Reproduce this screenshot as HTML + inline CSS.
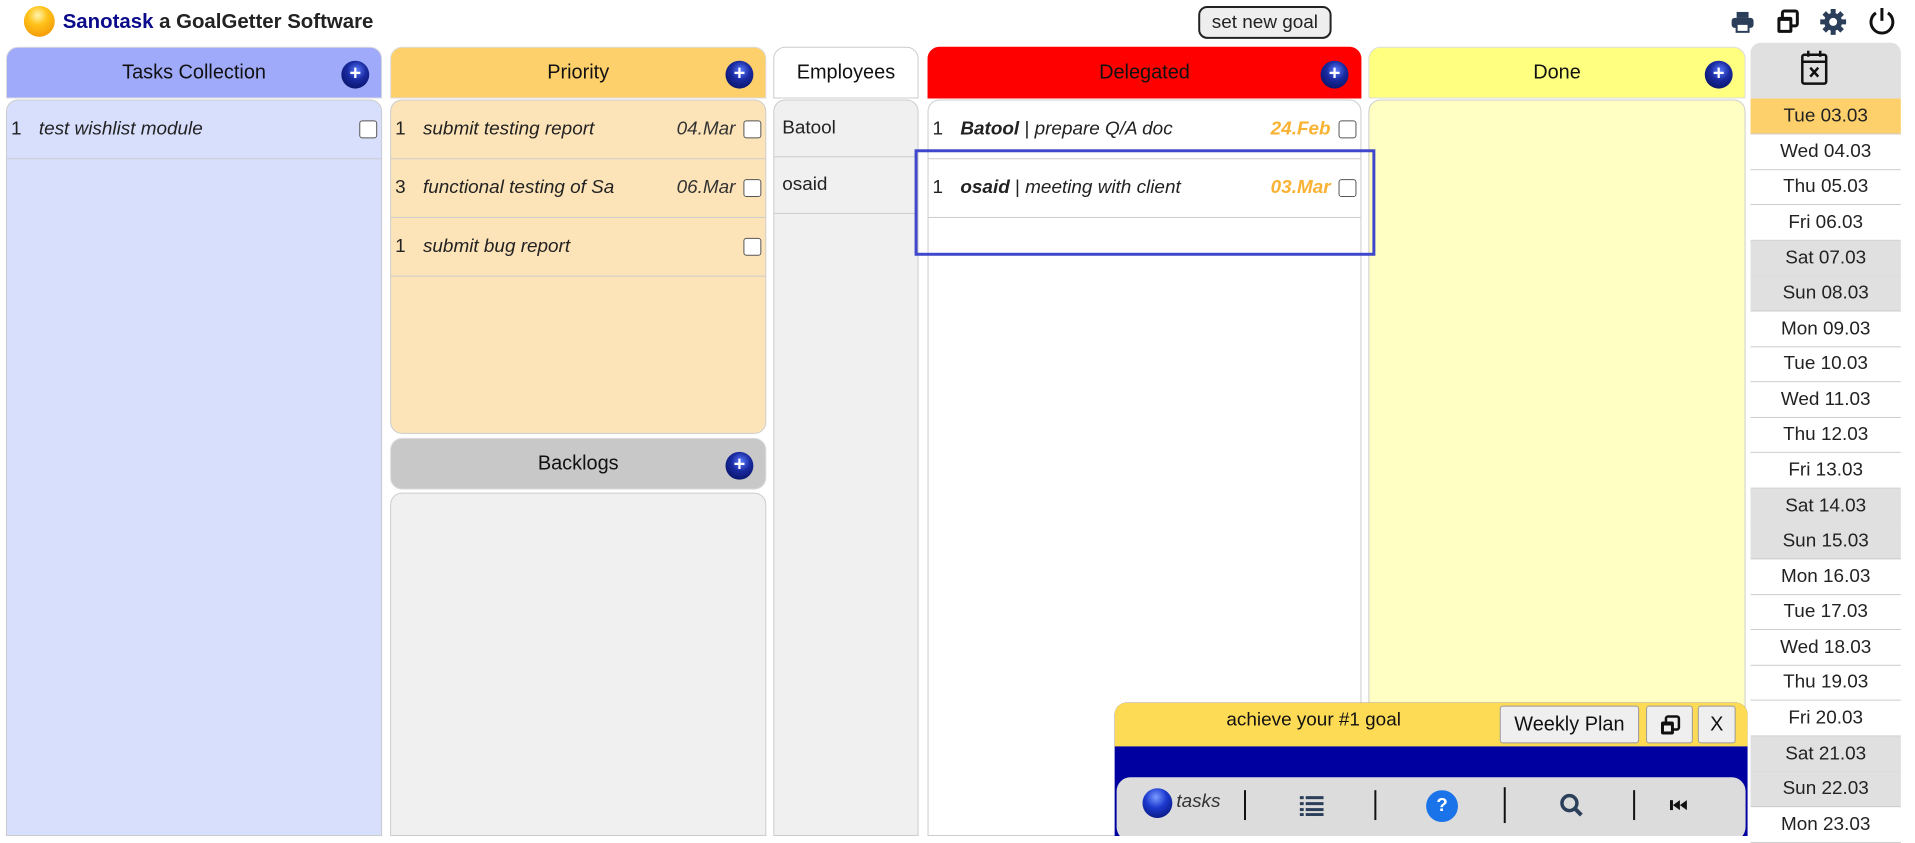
<!DOCTYPE html>
<html><head><meta charset="utf-8"><style>
*{box-sizing:border-box;margin:0;padding:0}
body{width:1915px;height:832px;overflow:hidden;background:#fff;font-family:"Liberation Sans",sans-serif;position:relative;font-size:19px;color:#222}
#w{position:absolute;left:0;top:0;width:1925px;height:840px;transform:scale(0.9952);transform-origin:0 0}
.a{position:absolute}
.hd{position:absolute;top:47px;height:52px;border-radius:12px 12px 0 0;text-align:center;line-height:50px;font-size:20px;color:#111;border:1px solid #ddd}
.bd{position:absolute;border:1px solid #ccc;border-radius:12px 12px 0 0}
.plus{position:absolute;right:12px;top:13px;width:28px;height:28px;border-radius:50%;background:radial-gradient(circle at 55% 35%,#5a7bff 0,#1a2aa0 40%,#000a50 100%);color:#fff;font-size:20px;line-height:27px;text-align:center;font-weight:bold}
.row{position:absolute;left:0;right:0;height:59px;border-bottom:1px solid #ccc;font-style:italic;line-height:58px}
.row .n{position:absolute;left:4px;font-style:normal}
.row .t{position:absolute;left:32px}
.row .d{position:absolute;right:30px;color:#333}
.cb{position:absolute;right:4px;top:20px;width:18px;height:18px;border:1.5px solid #555;border-radius:3px;background:#fff}
.cal{position:absolute;left:1759px;width:151px;height:36px;border-bottom:1px solid #ccc;text-align:center;line-height:35px;font-size:19px;color:#222}
</style></head><body><div id="w">
<div class="a" style="left:24px;top:6px;width:31px;height:31px;border-radius:50%;background:radial-gradient(circle at 45% 30%,#fff6b0 0,#ffc21a 35%,#f08a00 100%)"></div>
<div class="a" style="left:63px;top:10px;font-size:20.5px;font-weight:bold;color:#222"><span style="color:#0a0a8a">Sanotask</span> a GoalGetter Software</div>
<div class="a" style="left:1204px;top:6px;width:134px;height:33px;border:2px solid #222;border-radius:9px;background:#eee;text-align:center;line-height:29px;font-size:19px">set new goal</div>
<svg class="a" style="left:1738px;top:10px" width="26" height="24" viewBox="0 0 26 24"><rect x="7" y="2" width="12" height="6" fill="#2b3f5a"/><rect x="2" y="8" width="22" height="10" rx="3" fill="#2b3f5a"/><rect x="7" y="14" width="12" height="8" fill="#fff" stroke="#2b3f5a" stroke-width="2"/></svg>
<svg class="a" style="left:1783px;top:9px" width="26" height="26" viewBox="0 0 26 26"><rect x="8" y="2" width="15" height="15" rx="2" fill="none" stroke="#111" stroke-width="3"/><rect x="3" y="8" width="15" height="16" rx="2" fill="#111"/><rect x="6" y="12" width="9" height="9" fill="#fff"/></svg>
<svg class="a" style="left:1828px;top:8px" width="28" height="28" viewBox="0 0 28 28"><g fill="#2b3f5a"><circle cx="14" cy="14" r="9"/><g stroke="#2b3f5a" stroke-width="5"><line x1="14" y1="1" x2="14" y2="27"/><line x1="1" y1="14" x2="27" y2="14"/><line x1="5" y1="5" x2="23" y2="23"/><line x1="23" y1="5" x2="5" y2="23"/></g></g><circle cx="14" cy="14" r="4" fill="#fff"/></svg>
<svg class="a" style="left:1876px;top:6px" width="30" height="32" viewBox="0 0 30 32"><path d="M9 7 A11 11 0 1 0 21 7" fill="none" stroke="#111" stroke-width="3"/><line x1="15" y1="2" x2="15" y2="15" stroke="#111" stroke-width="3"/></svg>

<div class="hd" style="left:6px;width:378px;background:#a0aafb">Tasks Collection<div class="plus">+</div></div>
<div class="bd" style="left:6px;top:100px;width:378px;height:740px;background:#d8dffd">
<div class="row" style="top:0"><span class="n">1</span><span class="t">test wishlist module</span><div class="cb"></div></div></div>
<div class="hd" style="left:392px;width:378px;background:#fdd06b">Priority<div class="plus">+</div></div>
<div class="bd" style="left:392px;top:100px;width:378px;height:336px;background:#fde4b8;border-radius:12px">
<div class="row" style="top:0"><span class="n">1</span><span class="t">submit testing report</span><span class="d">04.Mar</span><div class="cb"></div></div>
<div class="row" style="top:59px"><span class="n">3</span><span class="t">functional testing of Sa</span><span class="d">06.Mar</span><div class="cb"></div></div>
<div class="row" style="top:118px"><span class="n">1</span><span class="t">submit bug report</span><div class="cb"></div></div></div>
<div class="hd" style="left:392px;top:440px;width:378px;background:#c8c8c8;border-radius:12px">Backlogs<div class="plus">+</div></div>
<div class="bd" style="left:392px;top:495px;width:378px;height:345px;background:#f0f0f0"></div>
<div class="hd" style="left:777px;width:146px;background:#fff;border-color:#ccc">Employees</div>
<div class="bd" style="left:777px;top:100px;width:146px;height:740px;background:#f0f0f0">
<div class="row" style="top:0;font-style:normal;height:57px;line-height:56px"><span style="position:absolute;left:8px">Batool</span></div>
<div class="row" style="top:57px;font-style:normal;height:57px;line-height:56px"><span style="position:absolute;left:8px">osaid</span></div></div>
<div class="hd" style="left:932px;width:436px;background:#ff0000;border-color:#f00">Delegated<div class="plus">+</div></div>
<div class="bd" style="left:932px;top:100px;width:436px;height:740px;background:#fff">
<div class="row" style="top:0"><span class="n">1</span><span class="t"><b>Batool</b> <span style="font-style:normal">|</span> prepare Q/A doc</span><span class="d" style="color:#f9b233;font-weight:bold">24.Feb</span><div class="cb"></div></div>
<div class="row" style="top:59px"><span class="n">1</span><span class="t"><b>osaid</b> <span style="font-style:normal">|</span> meeting with client</span><span class="d" style="color:#f9b233;font-weight:bold">03.Mar</span><div class="cb"></div></div></div>
<div class="hd" style="left:1375px;width:379px;background:#ffff80">Done<div class="plus">+</div></div>
<div class="bd" style="left:1375px;top:100px;width:379px;height:740px;background:#ffffc4"></div>
<div class="a" style="left:919px;top:150px;width:463px;height:107px;border:3px solid #3f48cc"></div>
<div class="a" style="left:1759px;top:43px;width:151px;height:56px;background:#e0e0e0;border-radius:10px 10px 0 0"></div>
<svg class="a" style="left:1808px;top:49px" width="30" height="38" viewBox="0 0 30 38"><rect x="3" y="6" width="24" height="29" rx="2" fill="none" stroke="#111" stroke-width="2.5"/><line x1="3" y1="13" x2="27" y2="13" stroke="#111" stroke-width="2.5"/><line x1="9" y1="2" x2="9" y2="8" stroke="#111" stroke-width="2.5"/><line x1="21" y1="2" x2="21" y2="8" stroke="#111" stroke-width="2.5"/><path d="M11 19 L19 28 M19 19 L11 28" stroke="#111" stroke-width="2.5"/></svg>
<div class="cal" style="top:99px;background:#fdd06b">Tue 03.03</div>
<div class="cal" style="top:135px">Wed 04.03</div>
<div class="cal" style="top:170px">Thu 05.03</div>
<div class="cal" style="top:206px">Fri 06.03</div>
<div class="cal" style="top:242px;background:#e0e0e0;border-color:#c4c4c4">Sat 07.03</div>
<div class="cal" style="top:277px;background:#e0e0e0">Sun 08.03</div>
<div class="cal" style="top:313px">Mon 09.03</div>
<div class="cal" style="top:348px">Tue 10.03</div>
<div class="cal" style="top:384px">Wed 11.03</div>
<div class="cal" style="top:419px">Thu 12.03</div>
<div class="cal" style="top:455px">Fri 13.03</div>
<div class="cal" style="top:491px;background:#e0e0e0;border-color:#c4c4c4">Sat 14.03</div>
<div class="cal" style="top:526px;background:#e0e0e0">Sun 15.03</div>
<div class="cal" style="top:562px">Mon 16.03</div>
<div class="cal" style="top:597px">Tue 17.03</div>
<div class="cal" style="top:633px">Wed 18.03</div>
<div class="cal" style="top:668px">Thu 19.03</div>
<div class="cal" style="top:704px">Fri 20.03</div>
<div class="cal" style="top:740px;background:#e0e0e0;border-color:#c4c4c4">Sat 21.03</div>
<div class="cal" style="top:775px;background:#e0e0e0">Sun 22.03</div>
<div class="cal" style="top:811px">Mon 23.03</div>
<div class="a" style="left:1120px;top:706px;width:636px;height:134px;background:#0000a0;border-radius:12px 12px 0 0;overflow:hidden">
<div class="a" style="left:0;top:0;width:636px;height:44px;background:#fddb55"></div>
<div class="a" style="left:0;top:7px;width:400px;text-align:center;font-size:19px;color:#111">achieve your #1 goal</div>
<div class="a" style="left:387px;top:3px;width:140px;height:38px;background:#efefef;border:1px solid #999;border-radius:3px;text-align:center;line-height:36px;font-size:20px;color:#111">Weekly Plan</div>
<div class="a" style="left:534px;top:3px;width:47px;height:38px;background:#efefef;border:1px solid #999;border-radius:3px"><svg style="position:absolute;left:12px;top:8px" width="22" height="22" viewBox="0 0 22 22"><rect x="7" y="2" width="13" height="13" rx="2" fill="none" stroke="#111" stroke-width="2.5"/><rect x="2" y="7" width="13" height="13" rx="2" fill="#111"/><rect x="5" y="11" width="7" height="6" fill="#efefef"/></svg></div>
<div class="a" style="left:586px;top:3px;width:38px;height:38px;background:#efefef;border:1px solid #999;border-radius:3px;text-align:center;line-height:36px;font-size:20px;color:#111">X</div>
<div class="a" style="left:2px;top:75px;width:632px;height:64px;background:#dcdcdc;border-radius:14px"></div>
<div class="a" style="left:28px;top:86px;width:30px;height:30px;border-radius:50%;background:radial-gradient(circle at 45% 30%,#7a9cff 0,#1d3ad0 40%,#000a60 100%)"></div>
<div class="a" style="left:62px;top:89px;font-style:italic;font-size:19px;color:#333">tasks</div>
<div class="a" style="left:130px;top:88px;width:2px;height:30px;background:#111"></div>
<div class="a" style="left:261px;top:88px;width:2px;height:30px;background:#111"></div>
<div class="a" style="left:391px;top:85px;width:2px;height:36px;background:#111"></div>
<div class="a" style="left:521px;top:88px;width:2px;height:30px;background:#111"></div>
<svg class="a" style="left:186px;top:92px" width="24" height="22" viewBox="0 0 24 22"><g fill="#2b3f5a"><rect x="0" y="2" width="4" height="3"/><rect x="6" y="2" width="18" height="3"/><rect x="0" y="8" width="4" height="3"/><rect x="6" y="8" width="18" height="3"/><rect x="0" y="14" width="4" height="3"/><rect x="6" y="14" width="18" height="3"/><rect x="0" y="19" width="4" height="3"/><rect x="6" y="19" width="18" height="3"/></g></svg>
<div class="a" style="left:313px;top:88px;width:32px;height:32px;border-radius:50%;background:#1a73e8;color:#fff;text-align:center;line-height:32px;font-weight:bold;font-size:19px">?</div>
<svg class="a" style="left:446px;top:90px" width="26" height="26" viewBox="0 0 26 26"><circle cx="11" cy="11" r="7.5" fill="none" stroke="#2b3f5a" stroke-width="3.5"/><line x1="16" y1="16" x2="23" y2="23" stroke="#2b3f5a" stroke-width="4"/></svg>
<svg class="a" style="left:558px;top:97px" width="20" height="12" viewBox="0 0 20 12"><g fill="#111"><rect x="0" y="1" width="3" height="10"/><path d="M3 6 L10 1 L10 11Z"/><path d="M10 6 L17 1 L17 11Z"/></g></svg>
</div>
</div></body></html>
